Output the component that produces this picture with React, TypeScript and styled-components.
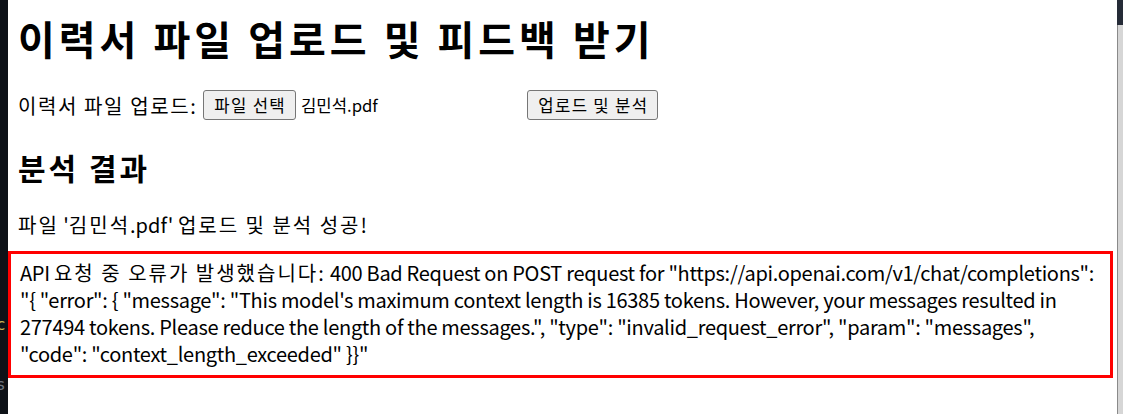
import React from "react";
import styled, { createGlobalStyle } from "styled-components";

const Global = createGlobalStyle`
  html, body { margin: 0; padding: 0; background: #ffffff; }
  body { font-family: "Noto Sans CJK KR", "Noto Sans", sans-serif; color: #000; }
`;

const Screen = styled.div`
  display: flex;
  width: 1123px;
  height: 414px;
  overflow: hidden;
`;

const EditorEdge = styled.div`
  position: relative;
  width: 8px;
  flex: none;
  background: #0d1117;
  overflow: hidden;
`;

const EdgeGlyph = styled.span<{ $top: number; $color: string }>`
  position: absolute;
  left: -4px;
  top: ${(p) => p.$top}px;
  font-family: "DejaVu Sans Mono", monospace;
  font-size: 16px;
  line-height: 16px;
  color: ${(p) => p.$color};
`;

const ScrollEdge = styled.div`
  width: 6px;
  flex: none;
  display: flex;
  flex-direction: column;
`;

const ScrollCap = styled.div`
  height: 25px;
  background: #252b37;
`;

const ScrollTrack = styled.div`
  flex: 1;
  background: #d6d6d6;
  border-left: 1px solid #8a8a8a;
`;

const Page = styled.main`
  flex: 1;
  min-width: 0;
  background: #fff;
  padding: 12px 10px 0 10px;
`;

const Ko = styled.span`
  letter-spacing: 0.1em;
`;

const Title = styled.h1`
  margin: 0 0 26px;
  font-size: 40px;
  line-height: 52px;
  font-weight: 700;
  letter-spacing: 4px;
`;

const UploadRow = styled.div`
  display: flex;
  align-items: center;
  height: 30px;
  font-size: 20px;
`;

const Label = styled.span`
  margin-right: 6px;
  letter-spacing: 1.6px;
`;

const FileField = styled.div`
  display: flex;
  align-items: center;
  width: 319px;
  margin-right: 5px;
`;

const NativeButton = styled.button`
  height: 30px;
  padding: 0 9px 0 10px;
  background: #efefef;
  border: 1px solid #767676;
  border-radius: 3px;
  font-family: "Noto Sans CJK KR", sans-serif;
  font-size: 16.7px;
  letter-spacing: 1.3px;
  color: #000;
  line-height: 1;
`;

const FileName = styled.span`
  margin-left: 5px;
  font-size: 16.7px;
`;

const Section = styled.h2`
  margin: 29px 0 26px;
  font-size: 30px;
  line-height: 36px;
  font-weight: 700;
  letter-spacing: 3px;
`;

const Status = styled.p`
  margin: 5px 0 13px;
  font-size: 20px;
  line-height: 27px;
`;

const ErrorBox = styled.div`
  margin: 0 -6px 0 -10px;
  border: 3px solid #ff0000;
  padding: 5px 10px 8px 9px;
  font-size: 20px;
  line-height: 27px;
  letter-spacing: -0.3px;
  word-wrap: break-word;
`;

const ErrorKo = styled.span`
  letter-spacing: 2px;
`;

const Keep = styled.span`
  white-space: nowrap;
`;

export default function App() {
  return (
    <>
      <Global />
      <Screen>
        <EditorEdge>
          <EdgeGlyph $top={317} $color="#c9b458">c</EdgeGlyph>
          <EdgeGlyph $top={377} $color="#6e7681">s</EdgeGlyph>
          <EdgeGlyph $top={404} $color="#c9b458">_</EdgeGlyph>
        </EditorEdge>
        <Page>
          <Title>이력서 파일 업로드 및 피드백 받기</Title>
          <UploadRow>
            <Label>이력서 파일 업로드:</Label>
            <FileField>
              <NativeButton type="button">파일 선택</NativeButton>
              <FileName>김민석.pdf</FileName>
            </FileField>
            <NativeButton type="button">업로드 및 분석</NativeButton>
          </UploadRow>
          <Section>분석 결과</Section>
          <Status>
            <Ko>파일</Ko> '<Ko>김민석</Ko>.pdf' <Ko>업로드 및 분석 성공</Ko>!
          </Status>
          <ErrorBox>
            API <ErrorKo>요청 중 오류가 발생했습니다:</ErrorKo> 400 Bad Request on POST request for
            "https://api.openai.com/v1/chat/completions": <Keep>"{"{"}</Keep> "error": {"{"} "message":
            "This model's maximum context length is 16385 tokens. However, your messages
            resulted in 277494 tokens. Please reduce the length of the messages.", "type":
            "invalid_request_error", "param": "messages", "code": "context_length_exceeded"{" "}
            {"}}"}"
          </ErrorBox>
        </Page>
        <ScrollEdge>
          <ScrollCap />
          <ScrollTrack />
        </ScrollEdge>
      </Screen>
    </>
  );
}
